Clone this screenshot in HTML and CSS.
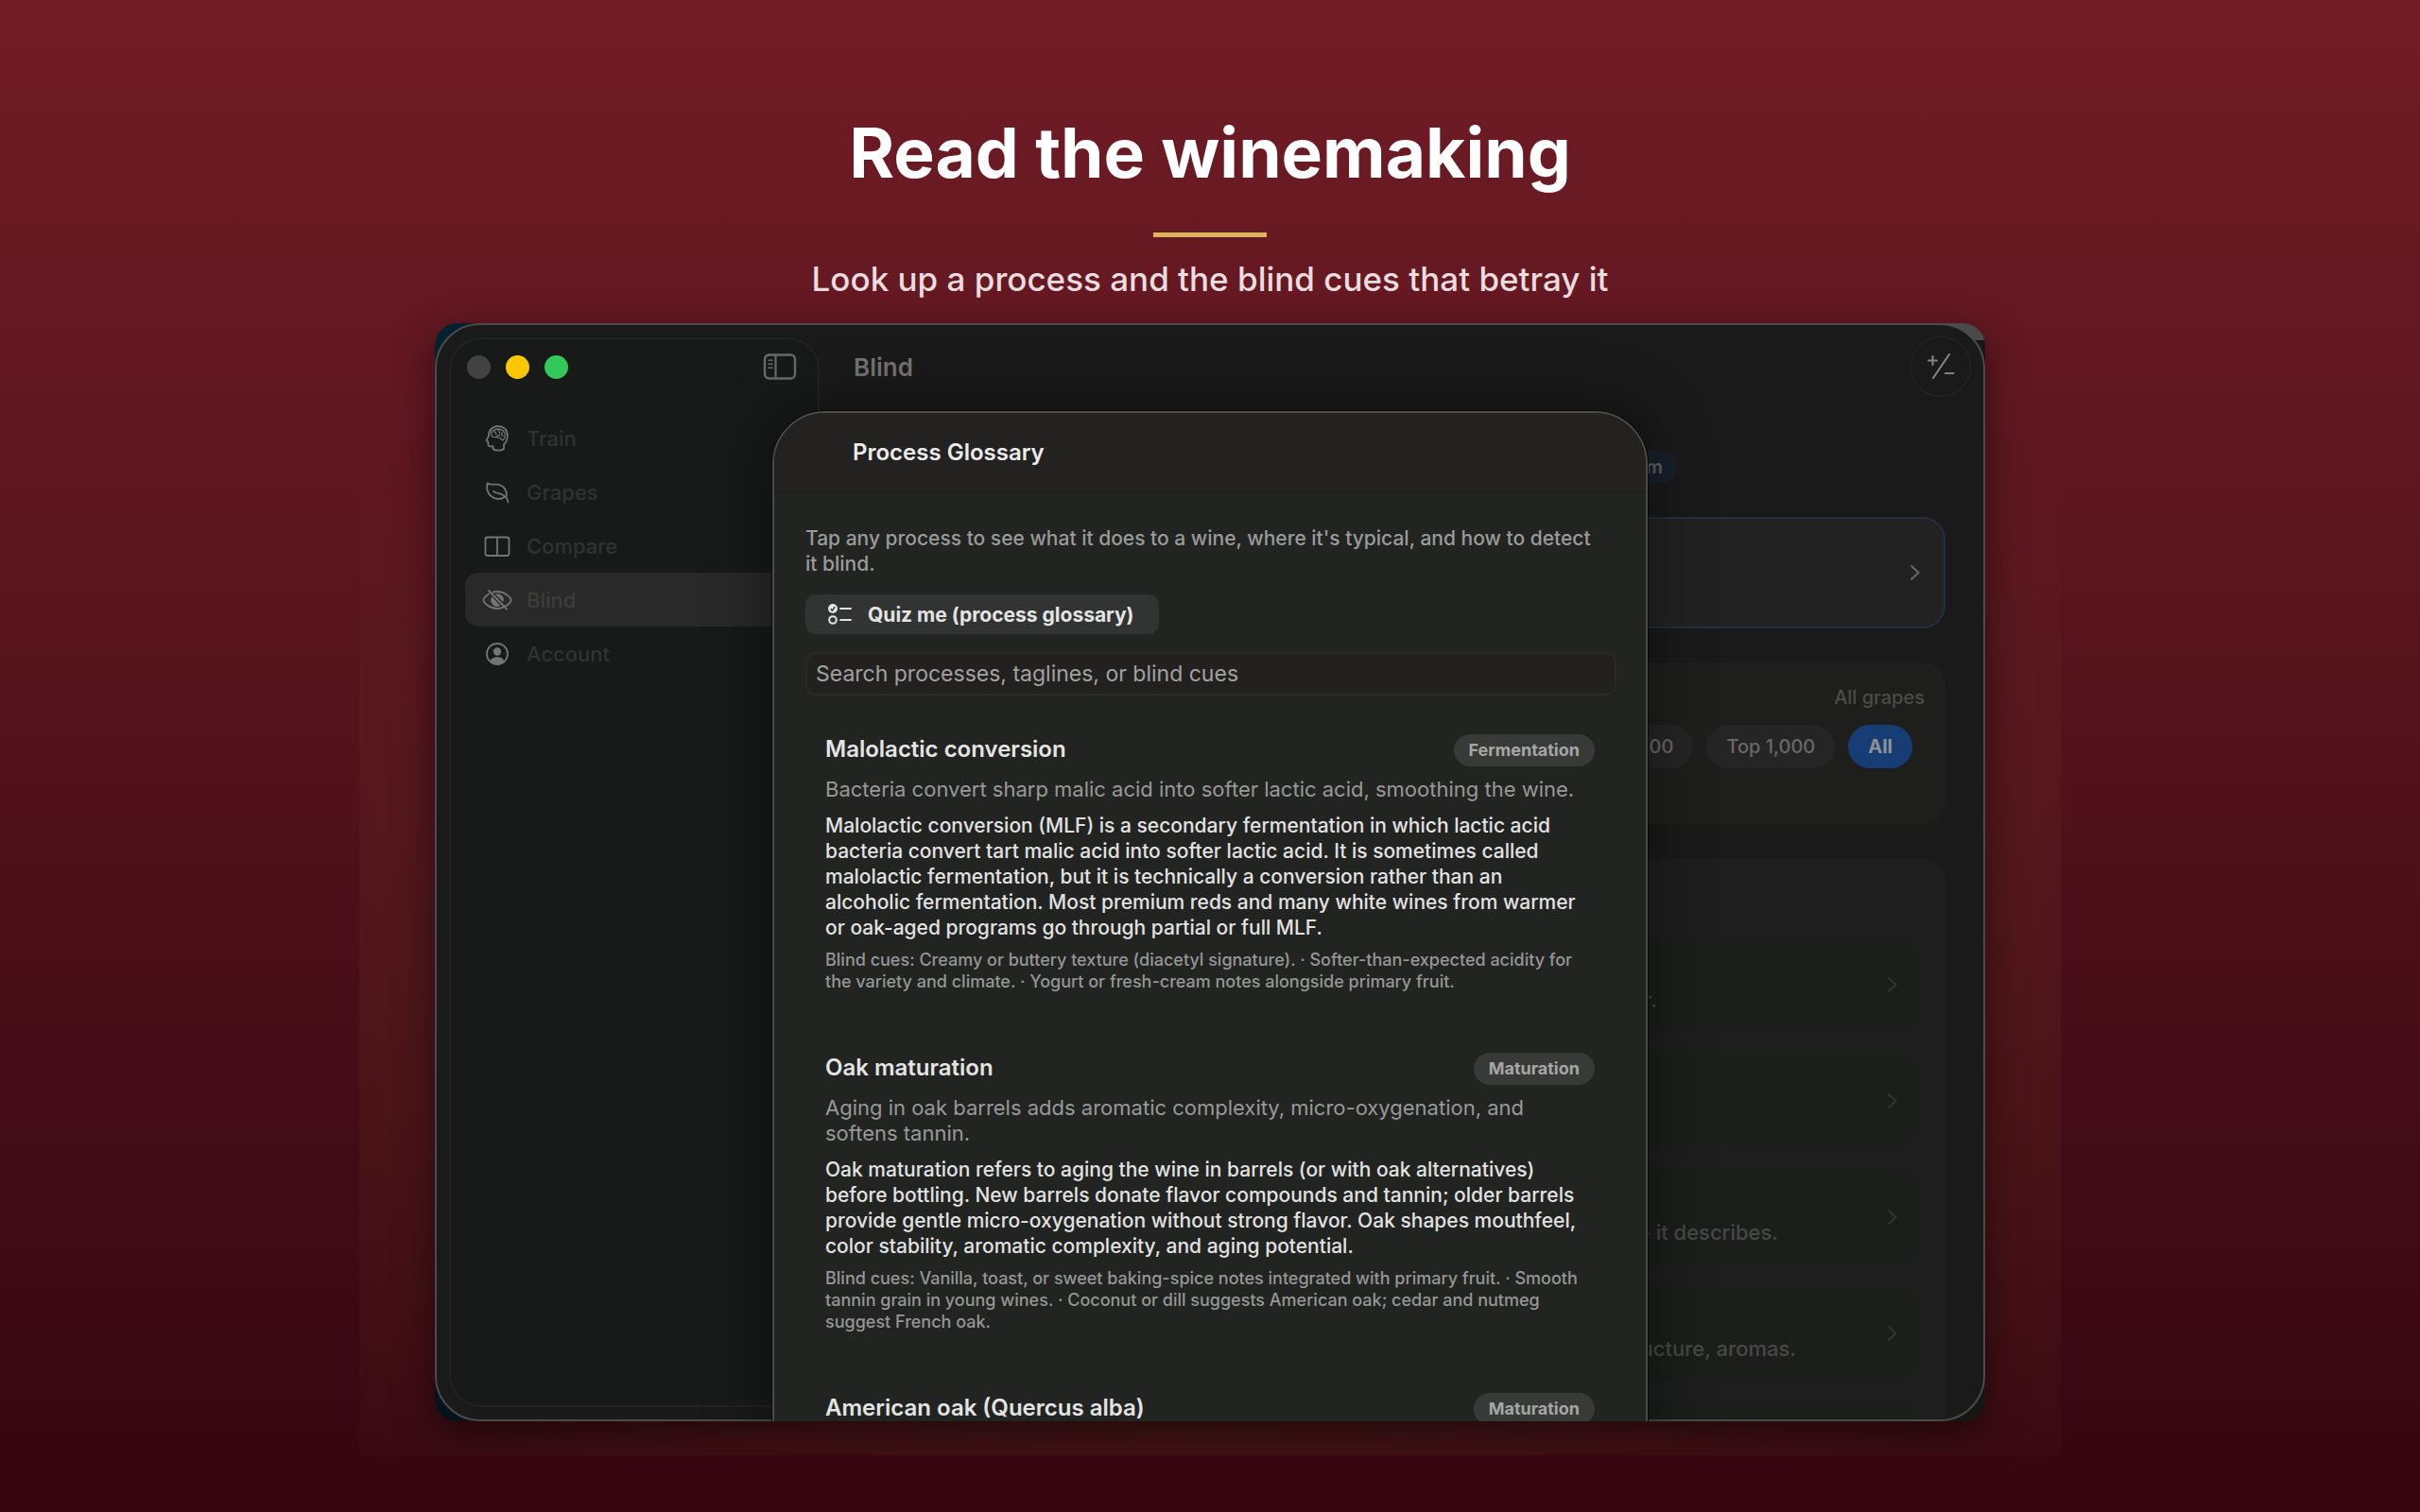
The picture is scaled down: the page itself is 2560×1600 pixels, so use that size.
FILE: index.html
```html
<!DOCTYPE html>
<html lang="en">
<head>
<meta charset="utf-8">
<title>Process Glossary</title>
<link rel="stylesheet" href="styles.css">
</head>
<body>
<main class="poster">
  <header class="headline">
    <h1>Read the winemaking</h1>
    <div class="rule"></div>
    <p>Look up a process and the blind cues that betray it</p>
  </header>

  <div class="stage">
    <div class="window">
      <div class="app">
        <nav class="sidebar" aria-label="Main">
          <div class="controls">
            <span class="light"></span>
            <span class="light yellow"></span>
            <span class="light green"></span>
            <button class="icon-button" aria-label="Toggle sidebar">
              <svg width="36" height="30" viewBox="0 0 36 30" fill="none" stroke="currentColor"><rect x="2" y="2.500" width="32" height="25" rx="4.500" stroke-width="2.400"/><path d="M13.500 2.500v25" stroke-width="2.200"/><path d="M6 8.200h4M6 12.200h4M6 16.200h4" stroke-width="1.600" stroke-linecap="round"/></svg>
            </button>
          </div>
          <ul class="menu">
            <li><a href="#train">
              <svg width="32" height="32" viewBox="0 0 32 32" fill="none" stroke="currentColor" stroke-width="1.800" stroke-linecap="round" stroke-linejoin="round"><path d="M11.500 25.500v1.500c2.500 2.300 9 2.200 11.500 0v-4.500c2.500-2.500 3.800-5 3.800-9.500C26.800 6.500 22.500 3 17 3S7.300 6.500 7 12.500c0 1.500-.8 2.800-2 4.300-.9 1.200-.5 1.900 1.200 2.300.3 2-.1 3.600.7 4.700.8.900 3 .5 4.600.3z"/><path d="M10 13c-1-4.500 2.500-7 7-7 4.600 0 7.600 3 7.300 7.500-.2 1.500-.8 2.500-1.800 4M10 13c1 1.800 3 1.800 5.500 1.300 2 .7 4.500 1 6 3.500M13 9c1.500 0 2 1 1.600 2.500M17 6.500c.2 1.500 2 2 1.600 4M21.500 9.500c-1.300 1-1 3 .5 4M15.500 14.300c.5-1.500 1.700-2 3-1.800" stroke-width="1.300"/></svg>
              <span>Train</span></a></li>
            <li><a href="#grapes">
              <svg width="32" height="32" viewBox="0 0 32 32" fill="none" stroke="currentColor" stroke-width="1.800" stroke-linecap="round" stroke-linejoin="round"><path d="M27.500 26.500c-.4-3.500-2.300-6-5.500-7.800-3.500-1.900-7-1.200-10-3.900M25.500 20.500c1.600-6.500-3-12.200-9.500-12.800-4.300-.4-7.500.8-10.500-1.500-.9 4.500-.3 9.500 3 13 4.200 4.400 11.500 5 15.500 1.600"/></svg>
              <span>Grapes</span></a></li>
            <li><a href="#compare">
              <svg width="32" height="32" viewBox="0 0 32 32" fill="none" stroke="currentColor" stroke-width="1.800"><rect x="3.500" y="6.500" width="25" height="19.500" rx="2.500"/><path d="M16 6.500V26"/></svg>
              <span>Compare</span></a></li>
            <li><a href="#blind" class="current" aria-current="page">
              <svg width="32" height="32" viewBox="0 0 32 32" fill="none" stroke="currentColor" stroke-width="1.800" stroke-linecap="round"><path d="M7 9.500C4 11.500 1.500 14.500 1.500 16c0 2.500 6.500 9 14.500 9 2.200 0 4.300-.5 6.200-1.300M11.500 7.700C13 7.200 14.500 7 16 7c8 0 14.500 6.500 14.500 9 0 1.400-2.300 4.200-5.600 6.300"/><path d="M10.500 12.500a6.500 6.500 0 0 0 8.800 9.200zM14 9.800a6.500 6.500 0 0 1 8.300 8.400z" fill="currentColor" stroke="none"/><path d="M7 6l19 19.500"/></svg>
              <span>Blind</span></a></li>
            <li><a href="#account">
              <svg width="32" height="32" viewBox="0 0 32 32"><circle cx="16" cy="16" r="11" fill="none" stroke="currentColor" stroke-width="1.800"/><circle cx="16" cy="13.500" r="4.200" fill="currentColor"/><path d="M8.500 23.500c1.500-3 4-4.300 7.500-4.300s6 1.300 7.500 4.300a10.500 10.500 0 0 1-15 0z" fill="currentColor"/></svg>
              <span>Account</span></a></li>
          </ul>
        </nav>

        <section class="content">
          <div class="toolbar">
            <h2>Blind</h2>
            <button class="round" aria-label="Add or remove">
              <svg width="32" height="32" viewBox="0 0 32 32" fill="none" stroke="currentColor" stroke-width="2.200" stroke-linecap="round"><path d="M8 28L25 3M3 9.500h9M7.500 5v9M21 23h8.500"/></svg>
            </button>
          </div>
          <div class="tag-row"><span class="tag">Premium</span></div>
          <a class="feature" href="#start" aria-label="Start">
            <svg width="16" height="20" viewBox="0 0 16 20"><path d="M4 3l7.500 7L4 17"/></svg>
          </a>
          <div class="panel filter">
            <p>All grapes</p>
            <div class="chips">
              <button>Top 500</button><button>Top 1,000</button><button class="on">All</button>
            </div>
          </div>
          <div class="panel list">
            <a href="#a"><span class="one">pour.</span><svg width="16" height="20" viewBox="0 0 16 20"><path d="M4 3l7.500 7L4 17"/></svg></a>
            <a href="#b"><span></span><svg width="16" height="20" viewBox="0 0 16 20"><path d="M4 3l7.500 7L4 17"/></svg></a>
            <a href="#c"><span class="two">grape it describes.</span><svg width="16" height="20" viewBox="0 0 16 20"><path d="M4 3l7.500 7L4 17"/></svg></a>
            <a href="#d"><span class="three">structure, aromas.</span><svg width="16" height="20" viewBox="0 0 16 20"><path d="M4 3l7.500 7L4 17"/></svg></a>
            <a href="#e"></a>
          </div>
        </section>
      </div>

      <section class="sheet" role="dialog" aria-labelledby="sheet-title">
        <h2 id="sheet-title">Process Glossary</h2>
        <div class="sheet-body">
          <p class="intro">Tap any process to see what it does to a wine, where it's typical, and how to detect<br>it blind.</p>
          <button class="quiz">
            <svg width="28" height="26" viewBox="0 0 28 26" fill="none" stroke="currentColor" stroke-width="2"><circle cx="6" cy="7" r="5" fill="currentColor" stroke="none"/><path d="M3.800 7.200l1.600 1.900 2.800-4" stroke="#31342f" stroke-width="1.400"/><circle cx="6" cy="19" r="3.800"/><path d="M14 7h11M14 19h11" stroke-linecap="round"/></svg>
            Quiz me (process glossary)
          </button>
          <input class="search" type="search" placeholder="Search processes, taglines, or blind cues" aria-label="Search processes">

          <article class="entry">
            <div class="entry-head"><h3>Malolactic conversion</h3><span class="badge">Fermentation</span></div>
            <p class="tagline">Bacteria convert sharp malic acid into softer lactic acid, smoothing the wine.</p>
            <p class="text">Malolactic conversion (MLF) is a secondary fermentation in which lactic acid<br>bacteria convert tart malic acid into softer lactic acid. It is sometimes called<br>malolactic fermentation, but it is technically a conversion rather than an<br>alcoholic fermentation. Most premium reds and many white wines from warmer<br>or oak-aged programs go through partial or full MLF.</p>
            <p class="cues">Blind cues: Creamy or buttery texture (diacetyl signature). · Softer-than-expected acidity for<br>the variety and climate. · Yogurt or fresh-cream notes alongside primary fruit.</p>
          </article>
          <article class="entry">
            <div class="entry-head"><h3>Oak maturation</h3><span class="badge">Maturation</span></div>
            <p class="tagline">Aging in oak barrels adds aromatic complexity, micro-oxygenation, and<br>softens tannin.</p>
            <p class="text">Oak maturation refers to aging the wine in barrels (or with oak alternatives)<br>before bottling. New barrels donate flavor compounds and tannin; older barrels<br>provide gentle micro-oxygenation without strong flavor. Oak shapes mouthfeel,<br>color stability, aromatic complexity, and aging potential.</p>
            <p class="cues">Blind cues: Vanilla, toast, or sweet baking-spice notes integrated with primary fruit. · Smooth<br>tannin grain in young wines. · Coconut or dill suggests American oak; cedar and nutmeg<br>suggest French oak.</p>
          </article>
          <article class="entry">
            <div class="entry-head"><h3>American oak (Quercus alba)</h3><span class="badge">Maturation</span></div>
          </article>
        </div>
      </section>
    </div>
  </div>
</main>
</body>
</html>
```

FILE: styles.css
```css
* { box-sizing: border-box; }
body {
  margin: 0;
  font-family: Inter, "Liberation Sans", sans-serif;
  background: #360710;
}
h1, h2, h3, p, ul { margin: 0; padding: 0; font-weight: inherit; }
button, input { font: inherit; border: 0; margin: 0; }
a { color: inherit; text-decoration: none; }
svg { display: block; flex: none; }

.poster {
  min-height: 100vh;
  display: flex;
  flex-direction: column;
  background: linear-gradient(#711c25, #5f1720 30%, #4a0f19 62%, #390812 92%, #350610);
}

.headline {
  display: flex;
  flex-direction: column;
  align-items: center;
  padding-top: 116px;
  color: #fff;
  text-align: center;
}
.headline h1 { font-size: 73px; line-height: 92px; font-weight: 700; }
.rule { width: 120px; height: 5px; margin-top: 38px; background: #deb35c; }
.headline p {
  margin-top: 20px;
  font-size: 35px;
  line-height: 48px;
  font-weight: 500;
  color: #e9dddf;
}

.stage {
  margin: 23px 380px 0;
  padding: 0 80px 36px;
  background: radial-gradient(ellipse 1300px 800px at 50% 62%, rgba(150, 100, 50, 0.280), transparent);
}

.window {
  position: relative;
  height: calc(100vh - 438px);
  overflow: hidden;
  border-radius: 24px;
  background:
    linear-gradient(#4a4a4a, #4a4a4a) right top / 50% 18px no-repeat,
    linear-gradient(#141714, #141714) right bottom / 50% 99% no-repeat,
    linear-gradient(#04222e, #03131c);
  box-shadow: 0 12px 40px rgba(0, 0, 0, 0.500);
}
.app {
  height: 100%;
  display: grid;
  grid-template-columns: 392px 1fr;
  grid-template-rows: minmax(0, 1fr);
  gap: 36px;
  padding: 13px 0 13px 13px;
  border: 2px solid #4b4b4b;
  border-radius: 48px;
  background: #1a1a1a;
  overflow: hidden;
}

.sidebar {
  padding: 14px 0 0 15px;
  border: 2px solid #222423;
  border-radius: 34px;
  background: #181a19;
}
.controls { display: flex; align-items: center; gap: 16px; padding: 0 22px 0 2px; }
.light { width: 25px; height: 25px; border-radius: 50%; background: #424240; }
.light.yellow { background: #fdc700; }
.light.green { background: #34c759; }
.icon-button { margin-left: auto; padding: 0; background: none; color: #6a6a6a; }
.menu { list-style: none; padding-top: 32px; }
.menu a {
  display: flex;
  align-items: center;
  gap: 15px;
  height: 57px;
  padding-left: 18px;
  border-radius: 14px;
  font-size: 22px;
  font-weight: 500;
  color: #313232;
}
.menu svg { color: #737473; }
.menu .current { background: #292929; color: #3c3c3c; }

.content { display: flex; flex-direction: column; padding: 0 40px 0 0; margin-bottom: -13px; }
.toolbar { display: flex; flex: none; align-items: center; justify-content: space-between; height: 62px; color: #737373; }
.toolbar h2 { font-size: 26px; font-weight: 600; }
.round {
  display: grid;
  place-items: center;
  width: 64px;
  height: 64px;
  margin-right: -27px;
  padding: 0;
  border: 1px solid #282a29;
  border-radius: 50%;
  background: #1a1a1a;
  color: #808080;
}
.tag-row { padding: 58px 284px 0 0; display: flex; justify-content: flex-end; }
.tag {
  padding: 0 15px;
  border-radius: 17px;
  background: #17202a;
  color: #5d6063;
  font-size: 20px;
  line-height: 34px;
  font-weight: 600;
}
.feature {
  display: flex;
  flex: none;
  align-items: center;
  justify-content: flex-end;
  height: 118px;
  margin-top: 36px;
  padding-right: 22px;
  border: 2px solid #232e40;
  border-radius: 24px;
  background: #222;
}
.content path { stroke-linecap: round; stroke-linejoin: round; }
.feature path, .list path { fill: none; stroke: #666; stroke-width: 2; }
.panel { border-radius: 24px; background: #1e1e1c; }
.filter { flex: none; height: 171px; margin-top: 36px; padding: 22px 22px 0; text-align: right; }
.filter p { font-size: 20px; line-height: 30px; font-weight: 500; color: #4c4c4b; }
.chips { display: flex; justify-content: flex-end; gap: 14px; padding: 14px 13px 0; }
.chips button {
  height: 46px;
  padding: 0 21px;
  border-radius: 23px;
  background: #252525;
  color: #696969;
  font-size: 20px;
  font-weight: 500;
}
.chips .on { background: #173d75; color: #8f9296; font-weight: 700; }
.list {
  display: flex;
  flex: 1;
  flex-direction: column;
  gap: 22px;
  min-height: 0;
  margin-top: 36px;
  padding: 83px 29px 0 28px;
  border-radius: 24px 24px 0 0;
  background: #1e1e1e;
  overflow: hidden;
}
.list a {
  display: flex;
  flex: none;
  align-items: center;
  justify-content: space-between;
  height: 101px;
  padding-right: 19px;
  border-radius: 20px;
  background: #1c1e1b;
}
.list path { stroke: #333; }
.list span { flex: 1; padding-top: 32px; text-align: right; font-size: 22px; font-weight: 500; color: #484848; }
.list .one { padding-right: 241px; }
.list .two { padding-right: 113px; }
.list .three { padding-right: 94px; }

.sheet {
  position: absolute;
  top: 93px;
  left: 50%;
  width: 926px;
  height: 1200px;
  margin-left: -463px;
  border: 2px solid #4a4b4a;
  border-radius: 56px 56px 0 0;
  background: #222422;
  box-shadow: 0 0 60px 10px rgba(0, 0, 0, 0.350), 0 0 0 1px #0c0c0c;
  overflow: hidden;
  white-space: nowrap;
}
.sheet > h2 {
  height: 85px;
  padding-left: 83px;
  border-bottom: 2px solid #1e1f1d;
  background: #232221;
  color: #ebebeb;
  font-size: 24px;
  line-height: 84px;
  font-weight: 600;
}
.sheet-body { padding: 34px 31px 0 33px; }
.intro { font-size: 21px; line-height: 27px; font-weight: 500; color: #9a9b9a; }
.quiz {
  display: flex;
  align-items: center;
  gap: 15px;
  height: 42px;
  margin-top: 19px;
  padding: 0 26px 0 23px;
  border-radius: 11px;
  background: #313432;
  color: #e3e4e3;
  font-size: 21px;
  font-weight: 700;
}
.search {
  display: block;
  width: 100%;
  height: 46px;
  margin-top: 19px;
  padding: 0 9px;
  border: 2px solid #282a28;
  border-radius: 11px;
  background: #222120;
  color: #ddd;
  font-size: 23px;
  font-weight: 400;
}
.search::placeholder { color: #a2a2a1; opacity: 1; }
.entry { padding: 40px 23px 23px 21px; }
.entry-head { display: flex; justify-content: space-between; }
.entry h3 { font-size: 24px; line-height: 34px; font-weight: 600; color: #e4e4e4; }
.badge {
  margin-top: 1px;
  height: 34px;
  padding: 0 16px;
  border-radius: 17px;
  background: #383a38;
  color: #a5a6a5;
  font-size: 18px;
  line-height: 34px;
  font-weight: 700;
}
.tagline { margin-top: 11px; font-size: 22px; line-height: 27px; font-weight: 400; color: #989998; }
.text { margin-top: 11px; font-size: 21px; line-height: 27px; font-weight: 500; color: #e2e2e2; }
.cues { margin-top: 9px; font-size: 18px; line-height: 23px; font-weight: 500; color: #969796; }
```
